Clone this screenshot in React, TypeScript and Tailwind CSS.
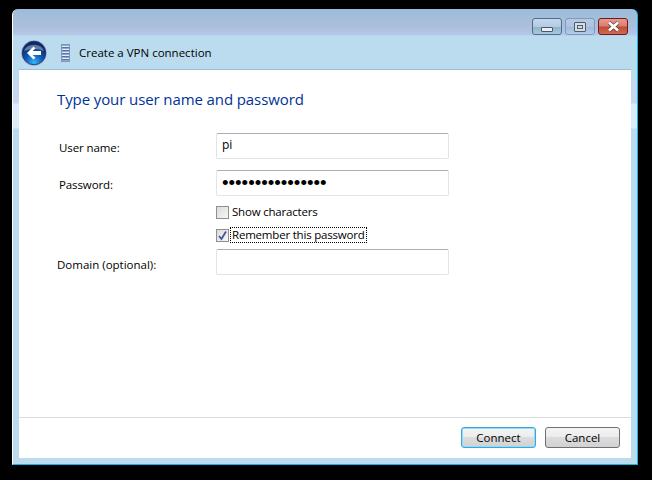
import { Fragment } from 'react'

const font = 'font-["Open_Sans","Noto_Sans",sans-serif]'

function WindowButton({ className, children }: { className: string; children: React.ReactNode }) {
  return (
    <div className={`flex h-[17px] w-[30px] items-center justify-center rounded-[3px] border ${className}`}>
      {children}
    </div>
  )
}

function BackIcon() {
  return (
    <svg width="26" height="26" viewBox="0 0 26 26">
      <defs>
        <radialGradient id="back" cx="50%" cy="90%" r="75%">
          <stop offset="0%" stopColor="#38b4f4" />
          <stop offset="50%" stopColor="#0e58b4" />
          <stop offset="100%" stopColor="#0b2a66" />
        </radialGradient>
      </defs>
      <circle cx="13" cy="13" r="13" fill="#b4bfdc" />
      <circle cx="13" cy="13" r="11.8" fill="url(#back)" stroke="#16306c" strokeWidth="0.8" />
      <path d="M3 11 A10.5 9 0 0 1 23 11 Q13 7 3 11Z" fill="#ffffff" opacity="0.35" />
      <path d="M12.5 6.5 L6 13 L12.5 19.5 L14.5 17.5 L11.5 15 L20 15 L20 11 L11.5 11 L14.5 8.5Z" fill="#ffffff" />
    </svg>
  )
}

function VpnIcon() {
  return (
    <svg width="9" height="18" viewBox="0 0 9 18">
      <rect x="0.5" y="0.5" width="8" height="17" fill="#8fa9cb" stroke="#7f96b8" />
      {[2, 5, 8, 11, 14].map((y) => (
        <Fragment key={y}>
          <rect x="1" y={y} width="7" height="1" fill="#e3ecf6" />
          <rect x="1" y={y + 1} width="7" height="1" fill="#4f76a6" />
        </Fragment>
      ))}
    </svg>
  )
}

function Field({ label, labelClass, children }: { label: string; labelClass: string; children?: React.ReactNode }) {
  return (
    <div className="flex items-center">
      <div className={`w-[159px] text-[11.5px] text-black ${labelClass}`}>{label}</div>
      <div className="flex h-[26px] w-[233px] items-center rounded-[2px] border border-[#dfe3ea] border-t-[#abadb3] bg-white pl-[5px] text-[12px] text-black">
        {children}
      </div>
    </div>
  )
}

function Checkbox({ label, checked, focused }: { label: string; checked?: boolean; focused?: boolean }) {
  return (
    <div className="flex items-center pl-[159px]">
      <div className="flex h-[13px] w-[13px] items-center justify-center border border-[#8e8f8f] bg-[linear-gradient(135deg,#dcdcdc,#f6f6f6)]">
        {checked && (
          <svg width="11" height="11" viewBox="0 0 11 11">
            <path d="M2 6 L4.5 9 L9 1.5" fill="none" stroke="#3d5a9c" strokeWidth="1.8" />
          </svg>
        )}
      </div>
      <div className={`ml-[1px] flex h-[16px] items-center px-[1px] text-[11.5px] tracking-[-0.2px] text-black ${focused ? 'border border-dotted border-black' : 'border border-transparent'}`}>
        {label}
      </div>
    </div>
  )
}

function DialogButton({ label, className }: { label: string; className: string }) {
  return (
    <div className={`flex h-[21px] w-[75px] items-center justify-center rounded-[3px] border bg-[linear-gradient(#f4f4f4_0%,#ececec_48%,#dcdcdc_50%,#d2d2d2_100%)] text-[11.5px] text-black ${className}`}>
      {label}
    </div>
  )
}

export default function App() {
  return (
    <div className={`h-[480px] w-[652px] overflow-hidden bg-black pl-[12px] pt-[9px] ${font}`}>
      <div className="flex h-[456px] w-[626px] flex-col rounded-t-[6px] border-b border-l border-r border-b-[#19b4e6] border-l-white border-r-[#19b4e6] bg-[linear-gradient(#9cbcdc_0px,#a9bfd8_14px,#aebedd_18px,#b5c9e8_26px,#bbdcee_27px,#bbdcee_71px,#c6d8ee_72px,#c6d8f0_94px,#dcecfa_95px,#dcecfa_119px,#bbdcee_120px)] pb-[6px] pl-[6px] pr-[6px]">
        <div className="flex justify-end gap-[3px] pr-[3px] pt-[9px]">
          <WindowButton className="items-end border-[#4f6c8f] bg-[linear-gradient(#c3d8ec_0%,#b5cbe2_50%,#8fb0c8_52%,#a9cbdc_100%)] pb-[2px]">
            <div className="h-[5px] w-[12px] rounded-[1px] border border-[#45566e] bg-[#eceef2]" />
          </WindowButton>
          <WindowButton className="border-[#7f9abb] bg-[linear-gradient(#b3c9e4_0%,#acc2de_50%,#9fb9d8_52%,#b3cce8_100%)]">
            <div className="flex h-[10px] w-[12px] items-center justify-center rounded-[1px] border border-[#4f5c70] bg-[#d6dbe4]">
              <div className="h-[4px] w-[6px] border border-[#4f5c70]" />
            </div>
          </WindowButton>
          <WindowButton className="border-[#6b1c22] bg-[linear-gradient(#e79a8c_0%,#d98070_48%,#c34a33_52%,#cf6a50_100%)]">
            <svg width="15" height="11" viewBox="0 0 15 11">
              <path d="M3 1.5 L12 9.5 M12 1.5 L3 9.5" stroke="#5c3a3a" strokeWidth="4" />
              <path d="M3 1.5 L12 9.5 M12 1.5 L3 9.5" stroke="#ffffff" strokeWidth="2.8" />
            </svg>
          </WindowButton>
        </div>

        <div className="flex h-[34px] items-center pl-[2px] pt-[2px]">
          <BackIcon />
          <div className="ml-[14px]">
            <VpnIcon />
          </div>
          <div className="ml-[9px] text-[11.5px] text-black">Create a VPN connection</div>
        </div>

        <div className="flex min-h-0 flex-1 flex-col border-t border-[#9fbdd3] bg-white">
          <div className="flex-1 pl-[38px] pt-[18px]">
            <div className="text-[15px] leading-[22px] tracking-[-0.1px] text-[#003399]">Type your user name and password</div>
            <div className="mt-[23px] flex flex-col">
              <Field label="User name:" labelClass="pl-[2px] pt-[3px] tracking-[-0.1px]">
                <span className="-mt-[2px]">pi</span>
              </Field>
              <div className="mt-[11px]">
                <Field label="Password:" labelClass="pl-[2px] pt-[3px] tracking-[-0.1px]">
                  <span className="font-['Liberation_Sans',sans-serif] text-[18.67px] leading-none">••••••••••••••••</span>
                </Field>
              </div>
              <div className="mt-[8px]">
                <Checkbox label="Show characters" />
              </div>
              <div className="mt-[7px]">
                <Checkbox label="Remember this password" checked focused />
              </div>
              <div className="mt-[6px]">
                <Field label="Domain (optional):" labelClass="pt-[6px]" />
              </div>
            </div>
          </div>
          <div className="flex h-[41px] items-start justify-end gap-[9px] border-t border-[#dcdcdc] pr-[11px] pt-[9px]">
            <DialogButton label="Connect" className="border-[#3ca6dc] shadow-[inset_0_0_0_1px_#8fdcf6]" />
            <DialogButton label="Cancel" className="border-[#707070]" />
          </div>
        </div>
      </div>
    </div>
  )
}
